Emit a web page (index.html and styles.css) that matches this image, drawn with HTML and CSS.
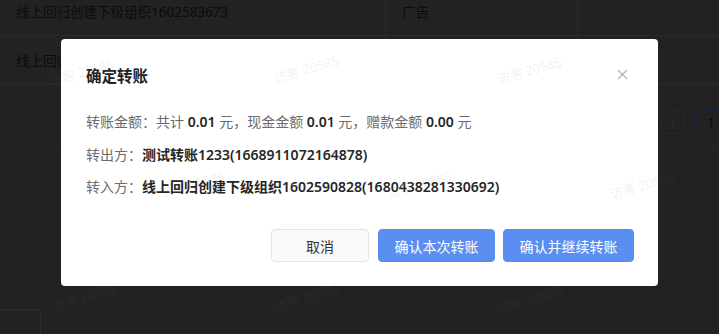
FILE: index.html
```html
<!DOCTYPE html>
<html lang="zh-CN">
<head>
<meta charset="utf-8">
<title>确定转账</title>
<link rel="stylesheet" href="styles.css">
</head>
<body>
<div class="page">
  <div class="table">
    <div class="row">
      <div class="cell c1">线上回归创建下级组织1602583673</div>
      <div class="cell c2">广告</div>
      <div class="cell c3"></div>
    </div>
    <div class="row">
      <div class="cell c1">线上回归创建下级组织1602583673</div>
      <div class="cell c2"></div>
      <div class="cell c3"></div>
    </div>
  </div>
  <div class="pager-bar">
    <span class="pg prev">&lsaquo;</span>
    <span class="pg cur">1</span>
  </div>
  <div class="bottom-box"></div>
</div>

<div class="modal">
  <div class="modal-header">
    <span class="modal-title">确定转账</span>
    <span class="close">
      <svg width="11" height="11" viewBox="0 0 11 11"><path d="M1 1L10 10M10 1L1 10" stroke="#b3b3b3" stroke-width="1.3" fill="none"/></svg>
    </span>
  </div>
  <div class="modal-body">
    <div class="line"><span class="lbl">转账金额：共计 </span><b>0.01</b><span class="lbl"> 元，现金金额 </span><b>0.01</b><span class="lbl"> 元，赠款金额 </span><b>0.00</b><span class="lbl"> 元</span></div>
    <div class="line"><span class="lbl">转出方：</span><b>测试转账1233(1668911072164878)</b></div>
    <div class="line"><span class="lbl">转入方：</span><b>线上回归创建下级组织1602590828(1680438281330692)</b></div>
  </div>
  <div class="modal-footer">
    <button class="btn btn-default">取消</button>
    <button class="btn btn-primary w1">确认本次转账</button>
    <button class="btn btn-primary w2">确认并继续转账</button>
  </div>
</div>

<div class="wm" style="left:48px;top:64px">访客 20585</div>
<div class="wm" style="left:273px;top:61px">访客 20585</div>
<div class="wm" style="left:496px;top:62px">访客 20585</div>
<div class="wm" style="left:-66px;top:176px">访客 20585</div>
<div class="wm" style="left:159px;top:176px">访客 20585</div>
<div class="wm" style="left:386px;top:176px">访客 20585</div>
<div class="wm" style="left:609px;top:177px">访客 20585</div>
<div class="wm" style="left:51px;top:289px">访客 20585</div>
<div class="wm" style="left:273px;top:289px">访客 20585</div>
<div class="wm" style="left:497px;top:291px">访客 20585</div>
</body>
</html>
```

FILE: styles.css
```css
* { box-sizing: border-box; }
html, body {
  margin: 0;
  padding: 0;
  width: 719px;
  height: 334px;
  overflow: hidden;
  background: #222222;
  font-family: "Noto Sans", "Noto Sans CJK SC", sans-serif;
}
.page {
  position: relative;
  width: 719px;
  height: 334px;
  overflow: hidden;
}
.table {
  margin-top: -13px;
  width: 740px;
}
.row {
  display: flex;
  height: 49px;
  border-bottom: 1px solid #2b2b2b;
}
.cell {
  display: flex;
  align-items: center;
  padding-left: 16px;
  font-size: 13.5px;
  color: #0c0c0c;
  border-right: 1px solid #2a2a2a;
  white-space: nowrap;
  overflow: hidden;
}
.c1 { width: 386px; }
.c2 { width: 192px; }
.c3 { flex: 1; border-right: none; }
.pager-bar {
  display: flex;
  justify-content: flex-end;
  gap: 9px;
  padding: 25px 0 13px 0;
  margin-right: -9px;
  border-bottom: 1px solid #272727;
}
.pg {
  width: 24px;
  height: 24px;
  border-radius: 4px;
  display: flex;
  align-items: center;
  justify-content: center;
  font-size: 14px;
  color: #0c0c0c;
}
.prev { border: 1px solid #282828; color: #2e2e2e; }
.cur { width: 34px; border: 1px solid #16223a; }
.bottom-box {
  position: absolute;
  left: -5px;
  top: 309px;
  width: 46px;
  height: 40px;
  border: 1px solid #2e2e2e;
  border-radius: 4px;
}
.modal {
  position: absolute;
  left: 61px;
  top: 39px;
  width: 597px;
  height: 247px;
  background: #ffffff;
  border-radius: 4px;
  padding: 0 24px 0 25px;
  display: flex;
  flex-direction: column;
}
.modal-header {
  display: flex;
  align-items: center;
  justify-content: space-between;
  height: 72px;
}
.modal-title {
  font-size: 15.5px;
  font-weight: 700;
  color: #222222;
}
.close {
  display: flex;
  margin-right: 6px;
  margin-top: -2px;
}
.modal-body {
  display: flex;
  flex-direction: column;
  gap: 10.5px;
}
.line {
  font-size: 14px;
  line-height: 22px;
  color: #333;
  white-space: nowrap;
}
.lbl { color: #6b6b6b; }
.line b { font-weight: 600; color: #262626; }
.modal-footer {
  display: flex;
  justify-content: flex-end;
  gap: 8px;
  margin-top: auto;
  padding-bottom: 24px;
}
.btn {
  height: 33px;
  border-radius: 4px;
  font-family: inherit;
  font-size: 14px;
  padding: 0;
  cursor: pointer;
}
.btn-default {
  width: 98px;
  background: #fafafa;
  border: 1px solid #e3e3e3;
  color: #333333;
  margin-right: 1px;
}
.btn-primary {
  background: #5a8ef0;
  border: 1px solid #5a8ef0;
  color: #ffffff;
}
.w1 { width: 117px; }
.w2 { width: 131px; }
.wm {
  position: absolute;
  width: 68px;
  font-size: 13px;
  line-height: 16px;
  white-space: nowrap;
  color: rgba(111, 111, 111, 0.11);
  transform: rotate(-16deg);
  transform-origin: center center;
  pointer-events: none;
}
```
